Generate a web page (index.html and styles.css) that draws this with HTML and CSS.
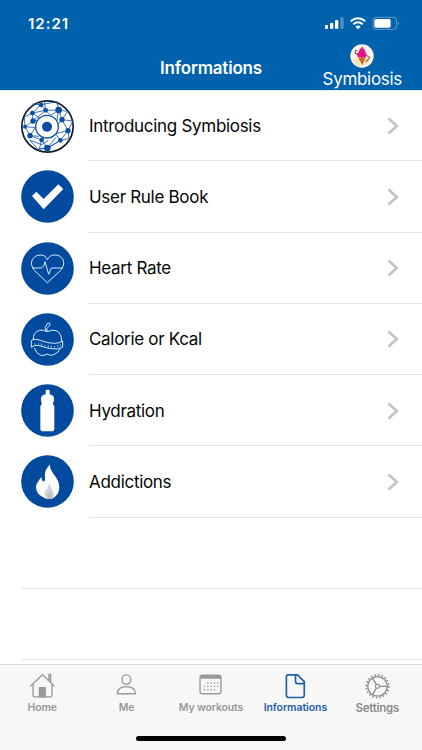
FILE: index.html
```html
<!DOCTYPE html>
<html lang="en">
<head>
    <meta charset="UTF-8">
    <meta name="viewport" content="width=device-width, initial-scale=1.0">
    <title>Informations</title>
    <link rel="stylesheet" href="styles.css">
</head>
<body>
    <header>
        <div class="status">
            <span class="time">12:21</span>
            <svg class="status-icons" viewBox="340 48 228 42">
                <g fill="#fff">
                    <rect x="343" y="75" width="9" height="12" rx="3"/>
                    <rect x="358" y="69" width="10" height="18" rx="3"/>
                    <rect x="373" y="60" width="10" height="27" rx="3"/>
                    <rect x="389" y="52" width="10" height="35" rx="3" opacity=".3"/>
                    <path d="M434 80q8-7 16 0l-8 8z"/>
                    <rect x="491" y="57" width="49" height="26" rx="5"/>
                    <path d="M562 66q5 4 0 9z" opacity=".5"/>
                </g>
                <path d="M420 64q22-19 44 0M428 73q14-12 28 0" fill="none" stroke="#fff" stroke-width="6"/>
                <rect x="487" y="52" width="71" height="36" rx="9" fill="none" stroke="#fff" stroke-width="2.5" opacity=".45"/>
            </svg>
        </div>
        <div class="nav">
            <h1>Informations</h1>
            <div class="brand">
                <svg class="avatar" viewBox="416 134 72 72">
                    <circle cx="452" cy="170" r="35" fill="#fff5e8"/>
                    <path d="M424 181q10-6 18-1l5 24q-17-5-23-23zM461 177l18-4q-4 18-20 27z" fill="#f7dfbd"/>
                    <path d="M440 174h24l-11 25z" fill="#d77d28"/>
                    <path d="M445 176l10 14M459 176l-9 15" stroke="#9d4f18" stroke-width="2"/>
                    <path d="M453 140q-2 7-8 10-2 5-3 8-7 4-4 12 3 7 9 3 4 7 8 0 8 4 10-3 3-7-3-11 1-6-4-9-4-4-5-10z" fill="#f0128e"/>
                    <path d="M440 166l-9-4 2-9 5 1M465 168l10 6-8 11-4 1M448 160h2M457 160h2" fill="none" stroke="#3b222b" stroke-width="2.5"/>
                    <path d="M450 166q4 4 8 0" fill="none" stroke="#8d0755" stroke-width="2"/>
                </svg>
                <span>Symbiosis</span>
            </div>
        </div>
    </header>

    <ul class="list">
        <li>
            <svg class="icon" viewBox="32 27 159 159">
                <circle cx="111.500" cy="106.500" r="77" fill="#fff" stroke="#111c2b" stroke-width="5"/>
                <path d="M66 66L92 41 106 58 145 57 155 86 173 119 150 148 111 171 94 147 59 134 44 107 68 90 66 66 106 58 68 90M92 41l48-9 5 25 27 4-17 25 32 4-14 29-37 9 14 21-39 23-29 2-23-26 35 13 20-13M145 57l-24 16-15-15-4-27M44 107l-2-29 24-12M44 107l31 3-16 24M92 41l-26-2M68 90l14-1M155 86l-12 13M150 148l26-5-3-24M111 171l-24 3 7-27M111 171l26-32M145 57l-5 30M59 134l27 2M66 66l24 16" fill="none" stroke="#1557ac" stroke-width="2.500"/>
                <circle cx="110" cy="107" r="34" fill="#fff" stroke="#0a4da6" stroke-width="4"/>
                <g fill="#0a4da6">
                    <circle cx="110" cy="107" r="15"/>
                    <circle cx="145" cy="57" r="10"/>
                    <circle cx="111" cy="171" r="10"/>
                    <circle cx="68" cy="90" r="8"/>
                    <circle cx="66" cy="66" r="7"/>
                    <circle cx="92" cy="42" r="7"/>
                    <circle cx="106" cy="58" r="7"/>
                    <circle cx="155" cy="86" r="8"/>
                    <circle cx="173" cy="119" r="8"/>
                    <circle cx="150" cy="148" r="7"/>
                    <circle cx="94" cy="147" r="7"/>
                    <circle cx="59" cy="134" r="8"/>
                    <circle cx="44" cy="107" r="6"/>
                </g>
            </svg>
            <span>Introducing Symbiosis</span>
            <svg class="chevron" viewBox="0 0 12 18"><path d="M1.500 1.500L9.800 9l-8.300 7.500"/></svg>
        </li>
        <li>
            <svg class="icon" viewBox="32 30 159 159">
                <circle cx="111.500" cy="109.500" r="79" fill="#024a9e"/>
                <path d="M65 108l13-13 22 22 44-44 15 14-59 61z" fill="#fff"/>
            </svg>
            <span>User Rule Book</span>
            <svg class="chevron" viewBox="0 0 12 18"><path d="M1.500 1.500L9.800 9l-8.300 7.500"/></svg>
        </li>
        <li>
            <svg class="icon" viewBox="32 28 159 159">
                <circle cx="111.500" cy="107.500" r="79" fill="#024a9e"/>
                <g class="line">
                    <path d="M111 150L73 114Q58 96 66 81q8-14 25-14 14 0 20 14 7-14 22-14 18 0 25 14 7 16-8 33z"/>
                    <path d="M65 106h28l8-7 3-12 11 38 8-19h34"/>
                </g>
            </svg>
            <span>Heart Rate</span>
            <svg class="chevron" viewBox="0 0 12 18"><path d="M1.500 1.500L9.800 9l-8.300 7.500"/></svg>
        </li>
        <li>
            <svg class="icon" viewBox="32 29 159 159">
                <circle cx="111.500" cy="108.500" r="79" fill="#024a9e"/>
                <g class="line">
                    <path d="M69 110q-2-23 18-29 10-3 24 4 15-7 26-3 17 6 17 32M72 134q5 16 20 22 8 3 18-4 11 7 21 2 14-6 18-18"/>
                    <path d="M108 85q-8-13 2-23 5-5 9-2 2 5-4 9-7 5-5 16"/>
                    <path d="M63 112q9-8 30 0 20 8 39 8 16 0 25-7v19q-15 8-34 4-19-3-31-8-18-5-29 4z"/>
                    <path d="M74 120v7M84 120v4M94 120v7M104 124v5M114 126v6M123 127v8M133 128v5M142 126v6M150 123v6" stroke-width="2"/>
                </g>
            </svg>
            <span>Calorie or Kcal</span>
            <svg class="chevron" viewBox="0 0 12 18"><path d="M1.500 1.500L9.800 9l-8.300 7.500"/></svg>
        </li>
        <li>
            <svg class="icon" viewBox="32 30 159 159">
                <circle cx="111.500" cy="109.500" r="79" fill="#024a9e"/>
                <path d="M106 50q0-3 3-3h6q3 0 3 3v11q11 2 13 11v9l-3 5q-1 5 4 10v68q0 8-9 8h-24q-9 0-9-8V96q5-5 4-10l-2-5v-9q2-9 14-11z" fill="#fff"/>
            </svg>
            <span>Hydration</span>
            <svg class="chevron" viewBox="0 0 12 18"><path d="M1.500 1.500L9.800 9l-8.300 7.500"/></svg>
        </li>
        <li>
            <svg class="icon" viewBox="32 31 159 159">
                <circle cx="111.500" cy="110.500" r="79" fill="#024a9e"/>
                <path d="M118 59q0 14 11 28 18 21 18 41 0 25-23 34H107q-30-11-30-34 0-11 8-20 6-9 8-11 0 9 7 14 5-2 4-13-2-17 6-27 5-6 8-12z" fill="#fff"/>
                <path d="M119 118q1 9 7 17 10 15-1 27h-15q-14-13-4-28 3 2 5-1 0-9 8-15z" fill="#d3d4d6"/>
                <path d="M119 135q0 5 5 10 5 11-4 17h-6q-7-9 0-17 4-5 5-10z" fill="#bfc0c2"/>
            </svg>
            <span>Addictions</span>
            <svg class="chevron" viewBox="0 0 12 18"><path d="M1.500 1.500L9.800 9l-8.300 7.500"/></svg>
        </li>
        <li class="empty"></li>
        <li class="empty"></li>
    </ul>

    <footer>
        <nav class="tabs">
            <a class="tab">
                <svg viewBox="87 56 80 76" fill="none" stroke="currentColor" stroke-width="4" stroke-linejoin="round">
                    <path d="M91 95l36-34 36 34M99 89v33q0 4 4 4h48q4 0 4-4V89M146 76V60h5v22"/>
                    <path d="M118 126V99h17v27z" fill="currentColor"/>
                </svg>
                <span>Home</span>
            </a>
            <a class="tab">
                <svg viewBox="341 56 80 76" fill="none" stroke="currentColor" stroke-width="4" stroke-linejoin="round">
                    <ellipse cx="380.500" cy="75" rx="13" ry="14"/>
                    <path d="M354 117q0-20 26-21 27 1 28 21z"/>
                </svg>
                <span>Me</span>
            </a>
            <a class="tab">
                <svg viewBox="592 56 80 76" fill="none" stroke="currentColor" stroke-width="4">
                    <rect x="601" y="62" width="62" height="55" rx="7"/>
                    <path d="M601 67h62" stroke-width="11"/>
                    <path d="M622 85h34M612 95h44M612 105h34" stroke-dasharray="4 6"/>
                </svg>
                <span>My workouts</span>
            </a>
            <a class="tab active">
                <svg viewBox="211 56 80 76" fill="none" stroke="currentColor" stroke-width="5" stroke-linejoin="round">
                    <path d="M230 61h27l20 20v40q0 7-7 7h-39q-7 0-7-7V67q0-6 6-6z"/>
                    <path d="M251 61v19q0 7 7 7h19"/>
                </svg>
                <span>Informations</span>
            </a>
            <a class="tab settings">
                <svg viewBox="463 56 80 76" fill="none" stroke="currentColor">
                    <circle cx="503" cy="95" r="33.500" stroke-width="5" stroke-dasharray="4.770 5.750"/>
                    <circle cx="503" cy="95" r="29" stroke-width="4"/>
                    <circle cx="503" cy="95" r="6" stroke-width="3"/>
                    <path d="M509 95h23M500 90l-13-21M500 100l-13 21" stroke-width="4"/>
                </svg>
                <span>Settings</span>
            </a>
        </nav>
        <div class="home-bar"></div>
    </footer>
</body>
</html>
```
FILE: styles.css
```css
* {
    box-sizing: border-box;
}
body {
    display: flex;
    flex-direction: column;
    height: 750px;
    margin: 0;
    overflow: hidden;
    font-family: Inter, sans-serif;
    background-color: #fff;
}
header {
    flex: none;
    height: 90px;
    background-color: #0062ac;
    color: #fff;
}
.status {
    display: flex;
    justify-content: space-between;
    height: 44px;
    padding: 16px 22px 0 28px;
}
.time {
    font-size: 15px;
    line-height: 16px;
    font-weight: 600;
    letter-spacing: 1px;
}
.status-icons {
    width: 76px;
    height: 14px;
}
.nav {
    display: grid;
    grid-template-columns: 1fr 110px 1fr;
    height: 46px;
}
h1 {
    grid-column: 2;
    justify-self: center;
    margin: 13px 0 0;
    font-size: 17px;
    line-height: 22px;
    font-weight: 600;
    letter-spacing: -0.2px;
}
.brand {
    display: flex;
    flex-direction: column;
    align-items: center;
    justify-self: end;
    margin-right: 20px;
    font-size: 17px;
    line-height: 22px;
    letter-spacing: -0.3px;
}
.avatar {
    width: 24px;
    height: 24px;
}
.list {
    flex: 1;
    min-height: 0;
    margin: 0;
    padding: 0;
    overflow: hidden;
    list-style: none;
    border-top: 1px solid #d5eaff;
}
.list li {
    display: grid;
    grid-template-columns: 68px 1fr 12px;
    align-items: center;
    height: 71.250px;
    margin-left: 21px;
    padding-right: 23px;
    font-size: 17px;
    letter-spacing: -0.3px;
    color: #050505;
    background: linear-gradient(#e4e4e4, #e4e4e4) 68px 100% / 100% 1px no-repeat;
}
.list li:first-child {
    height: 70.250px;
}
.list .empty {
    background-position: 0 100%;
}
.icon {
    width: 53px;
    height: 53px;
}
.line {
    fill: none;
    stroke: #d5edff;
    stroke-width: 3;
    stroke-linejoin: round;
}
.chevron {
    width: 12px;
    height: 18px;
    fill: none;
    stroke: #c2c2c4;
    stroke-width: 2.500;
}
footer {
    flex: none;
    height: 86px;
    background-color: #f7f7f7;
    border-top: 1px solid #dadada;
}
.tabs {
    display: grid;
    grid-template-columns: repeat(5, 1fr);
    height: 71px;
    padding-top: 8px;
}
.tab {
    display: flex;
    flex-direction: column;
    align-items: center;
    font-size: 10.500px;
    line-height: 14px;
    font-weight: 600;
    letter-spacing: -0.150px;
    color: #999;
    white-space: nowrap;
}
.tab svg {
    width: 27px;
    height: 26px;
    margin-bottom: 2px;
}
.active {
    color: #1c60aa;
    letter-spacing: -0.080px;
}
.settings {
    padding-right: 5px;
    font-size: 11.500px;
    letter-spacing: -0.250px;
    color: #8c8c8c;
}
.home-bar {
    width: 150px;
    height: 5px;
    margin: 0 auto;
    border-radius: 3px;
    background-color: #000;
}
```
